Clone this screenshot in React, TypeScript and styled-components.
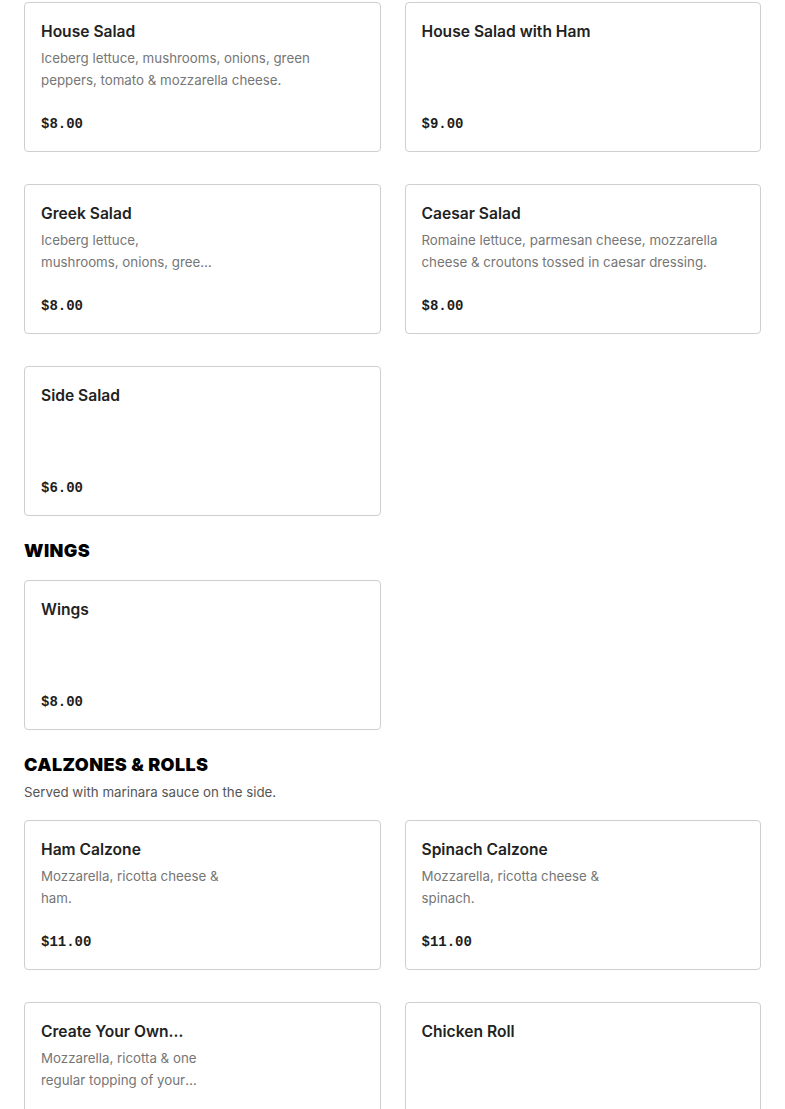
import styled, { createGlobalStyle } from 'styled-components';

const GlobalStyle = createGlobalStyle`
  html, body {
    margin: 0;
    padding: 0;
    background: #ffffff;
  }
  * { box-sizing: border-box; }
`;

type Item = {
  name: string;
  desc?: string;
  price?: string;
  textWidth?: number;
};

type Section = {
  title?: string;
  note?: string;
  items: Item[];
};

const sections: Section[] = [
  {
    items: [
      { name: 'House Salad', desc: 'Iceberg lettuce, mushrooms, onions, green peppers, tomato & mozzarella cheese.', price: '$8.00' },
      { name: 'House Salad with Ham', price: '$9.00' },
      { name: 'Greek Salad', desc: 'Iceberg lettuce, mushrooms, onions, green peppers, tomato, feta cheese & black olives.', price: '$8.00', textWidth: 172 },
      { name: 'Caesar Salad', desc: 'Romaine lettuce, parmesan cheese, mozzarella cheese & croutons tossed in caesar dressing.', price: '$8.00' },
      { name: 'Side Salad', price: '$6.00' },
    ],
  },
  {
    title: 'WINGS',
    items: [{ name: 'Wings', price: '$8.00' }],
  },
  {
    title: 'CALZONES & ROLLS',
    note: 'Served with marinara sauce on the side.',
    items: [
      { name: 'Ham Calzone', desc: 'Mozzarella, ricotta cheese & ham.', price: '$11.00', textWidth: 180 },
      { name: 'Spinach Calzone', desc: 'Mozzarella, ricotta cheese & spinach.', price: '$11.00', textWidth: 180 },
      { name: 'Create Your Own…', desc: 'Mozzarella, ricotta & one regular topping of your choice. Additional toppings extra.', price: '$11.00', textWidth: 180 },
      { name: 'Chicken Roll', price: '$10.00' },
    ],
  },
];

const Page = styled.main`
  padding: 2px 24px 40px;
  font-family: Inter, 'Liberation Sans', sans-serif;
  color: #222222;
`;

const Block = styled.section`
  & + & {
    margin-top: 23px;
  }
`;

const Header = styled.header<{ $hasNote: boolean }>`
  margin-bottom: ${p => (p.$hasNote ? 18 : 17)}px;
`;

const Heading = styled.h2`
  margin: 0;
  font-size: 18px;
  line-height: 24px;
  font-weight: 900;
  letter-spacing: 0.4px;
  color: #000000;
`;

const Note = styled.p`
  margin: 5px 0 0;
  font-size: 13.3px;
  line-height: 20px;
  color: #555555;
`;

const Grid = styled.div`
  display: grid;
  grid-template-columns: repeat(2, minmax(0, 1fr));
  column-gap: 24px;
  row-gap: 32px;
`;

const Card = styled.article`
  height: 150px;
  border: 1px solid #cfcfcf;
  border-radius: 4px;
  padding: 17px 16px 17px;
  display: flex;
  flex-direction: column;
  background: #ffffff;
`;

const Name = styled.h3`
  margin: 0;
  font-size: 15.6px;
  line-height: 24px;
  font-weight: 600;
  color: #222222;
`;

const Desc = styled.p<{ $width?: number }>`
  margin: 3px 0 0;
  max-width: ${p => (p.$width ? `${p.$width}px` : '100%')};
  font-size: 13.3px;
  line-height: 22px;
  color: #767676;
  display: -webkit-box;
  -webkit-line-clamp: 2;
  -webkit-box-orient: vertical;
  overflow: hidden;
`;

const Price = styled.div`
  margin-top: auto;
  font-family: 'Liberation Mono', 'DejaVu Sans Mono', monospace;
  font-size: 14px;
  line-height: 20px;
  font-weight: 700;
  color: #1d1d1d;
`;

export default function App() {
  return (
    <>
      <GlobalStyle />
      <Page>
        {sections.map((s, i) => (
          <Block key={i}>
            {s.title && (
              <Header $hasNote={!!s.note}>
                <Heading>{s.title}</Heading>
                {s.note && <Note>{s.note}</Note>}
              </Header>
            )}
            <Grid>
              {s.items.map(item => (
                <Card key={item.name}>
                  <Name>{item.name}</Name>
                  {item.desc && <Desc $width={item.textWidth}>{item.desc}</Desc>}
                  {item.price && <Price>{item.price}</Price>}
                </Card>
              ))}
            </Grid>
          </Block>
        ))}
      </Page>
    </>
  );
}
